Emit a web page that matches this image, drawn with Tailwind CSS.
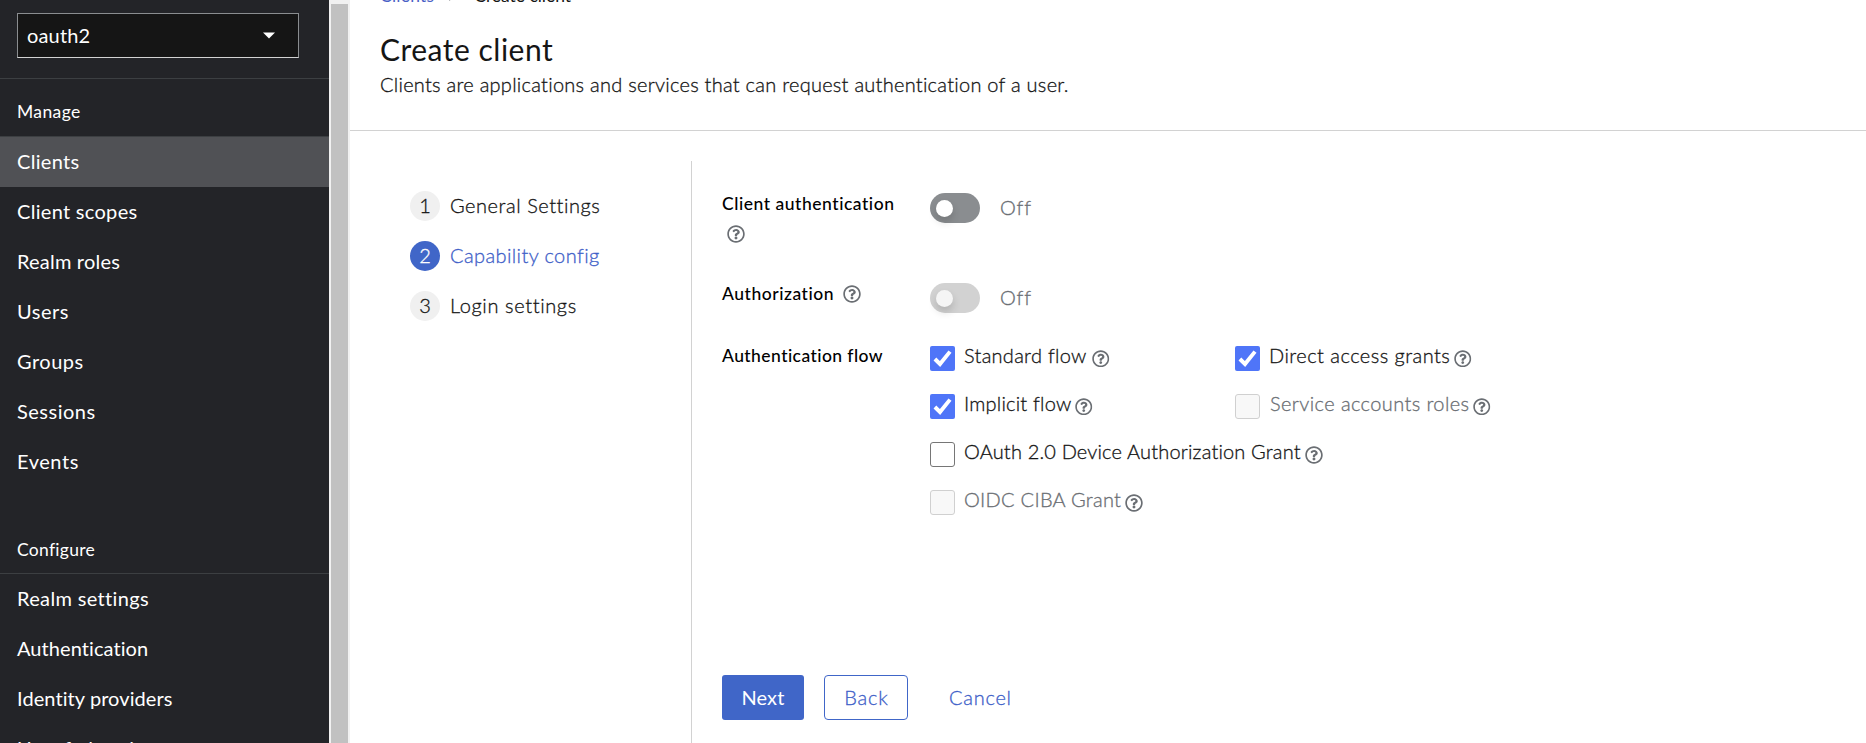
<!DOCTYPE html>
<html lang="en">
<head>
<meta charset="utf-8">
<title>Create client</title>
<script src="https://cdn.jsdelivr.net/npm/@tailwindcss/browser@4"></script>
</head>
<body class="flex h-[743px] w-[1866px] overflow-hidden bg-white font-[Lato,sans-serif] text-[20px] leading-[30px] text-[#151515]">
<svg class="hidden">
  <symbol id="help" viewBox="0 0 512 512"><path fill="currentColor" d="M256 8C119.043 8 8 119.083 8 256c0 136.997 111.043 248 248 248s248-111.003 248-248C504 119.083 392.957 8 256 8zm0 448c-110.532 0-200-89.431-200-200 0-110.495 89.472-200 200-200 110.491 0 200 89.471 200 200 0 110.53-89.431 200-200 200zm107.244-255.2c0 67.052-72.421 68.084-72.421 92.863V300c0 6.627-5.373 12-12 12h-45.647c-6.627 0-12-5.373-12-12v-8.659c0-35.745 27.1-50.034 47.579-61.516 17.561-9.845 28.324-16.541 28.324-29.579 0-17.246-21.999-28.693-39.784-28.693-23.189 0-33.894 10.977-48.942 29.969-4.057 5.12-11.46 6.071-16.666 2.124l-27.824-21.098c-5.107-3.872-6.251-11.066-2.644-16.363C184.846 131.491 214.94 112 261.794 112c49.071 0 101.45 38.304 101.45 88.8zM298 368c0 23.159-18.841 42-42 42s-42-18.841-42-42 18.841-42 42-42 42 18.841 42 42z"/></symbol>
  <symbol id="check" viewBox="0 0 25 25"><path fill="none" stroke="#fff" stroke-width="3.9" d="M4.9 13 10 18 20 5.6"/></symbol>
</svg>

<aside class="h-full w-[329px] shrink-0 overflow-hidden bg-[#232428] text-white">
  <div class="h-[79px] border-b border-[#3c3f42] pt-[13px] pl-[17px]">
    <div class="flex h-[45px] w-[282px] items-center justify-between border border-[#8a8d90] border-b-[#d2d2d2] bg-[#151515] pr-[23px] pl-[9px]">
      <span class="leading-[28px] pb-[2px] tracking-[0.15px]">oauth2</span>
      <svg class="h-[7px] w-[12px]" viewBox="0 0 12 7"><path fill="#fff" d="M0 0.4H12L6 6.6Z"/></svg>
    </div>
  </div>
  <h2 class="flex h-[58px] items-center border-b border-[#3c3f42] pt-[9px] pl-[17px] text-[17.5px] tracking-[0.38px]">Manage</h2>
  <nav class="mb-[50px] *:flex *:h-[50px] *:items-center *:pb-[2px] *:pl-[17px]">
    <a class="bg-[#505155] tracking-[0.31px]">Clients</a>
    <a class="tracking-[0.3px]">Client scopes</a>
    <a class="tracking-[0.2px]">Realm roles</a>
    <a class="tracking-[0.5px]">Users</a>
    <a class="tracking-[0.5px]">Groups</a>
    <a class="tracking-[0.5px]">Sessions</a>
    <a class="tracking-[0.55px]">Events</a>
  </nav>
  <h2 class="flex h-[37px] items-start border-b border-[#3c3f42] pl-[17px] text-[17.5px] leading-[25px] tracking-[0.28px]">Configure</h2>
  <nav class="*:flex *:h-[50px] *:items-center *:pb-[2px] *:pl-[17px]">
    <a class="tracking-[0.34px]">Realm settings</a>
    <a class="tracking-[0.08px]">Authentication</a>
    <a class="tracking-[0.08px]">Identity providers</a>
    <a class="tracking-[0.3px]">User federation</a>
  </nav>
</aside>
<div class="h-full w-[21px] shrink-0 bg-[#f1f1f1] pt-1 pr-[2px] pl-[2px]"><div class="h-full bg-[#c1c1c1]"></div></div>

<main class="flex h-full min-w-0 flex-1 flex-col">
  <header class="-mt-[17px] border-b border-[#d2d2d2] pb-[31px] pl-[30px]">
    <div class="flex h-[26px] items-center text-[17.5px] leading-[26px]">
      <a class="tracking-[0.22px] text-[#4a5fc6]">Clients</a>
      <svg class="mr-[19px] mb-[3px] ml-[14px] h-[12px] w-[7px]" viewBox="0 0 7 12"><path fill="none" stroke="#6a6e73" stroke-width="2" d="M1 1 6 6 1 11"/></svg>
      <span class="tracking-[-0.04px]">Create client</span>
    </div>
    <h1 class="mt-[21px] text-[30px] leading-[39px] tracking-[0.5px]">Create client</h1>
    <p class="font-light tracking-[0.26px] [-webkit-text-stroke:0.3px]">Clients are applications and services that can request authentication of a user.</p>
  </header>
  <div class="flex min-h-0 flex-1 pt-[30px]">
    <nav class="flex w-[342px] shrink-0 flex-col gap-5 border-r border-[#d2d2d2] pt-[30px] pl-[60px] leading-[28px] font-light [-webkit-text-stroke:0.3px]">
      <a class="flex gap-[10px]"><span class="size-[30px] rounded-full bg-[#f0f0f0] text-center leading-[29px]">1</span><span class="tracking-[0.54px]">General Settings</span></a>
      <a class="flex gap-[10px] text-[#4060c8]"><span class="size-[30px] rounded-full bg-[#4066c8] text-center leading-[29px] text-white">2</span><span class="tracking-[0.4px]">Capability config</span></a>
      <a class="flex gap-[10px]"><span class="size-[30px] rounded-full bg-[#f0f0f0] text-center leading-[29px]">3</span><span class="tracking-[0.62px]">Login settings</span></a>
    </nav>
    <form class="flex flex-1 flex-col pt-[28px] pb-[23px] pl-[30px]">
      <div class="flex h-[90px]">
        <div class="w-[208px] text-[17.5px] font-medium text-black"><div class="tracking-[0.53px]">Client authentication</div><svg class="mt-[6px] ml-[5px] size-[18px] text-[#6a6e73]"><use href="#help"/></svg></div>
        <div class="flex h-[30px] gap-5 pt-1">
          <span class="h-[30px] w-[50px] shrink-0 rounded-full bg-[#8a8d90] pt-[7px] pl-[6px]"><span class="block size-[17px] rounded-full bg-white shadow-[0_5px_8px_rgba(3,3,3,0.16)]"></span></span>
          <span class="leading-[28px] font-light tracking-[0.8px] text-[#6a6e73] [-webkit-text-stroke:0.3px]">Off</span>
        </div>
      </div>
      <div class="flex h-[62px]">
        <div class="flex w-[208px] items-start text-[17.5px] font-medium text-black"><span class="tracking-[0.53px]">Authorization</span><svg class="mt-[6px] ml-[9px] size-[18px] text-[#6a6e73]"><use href="#help"/></svg></div>
        <div class="flex h-[30px] gap-5 pt-1">
          <span class="h-[30px] w-[50px] shrink-0 rounded-full bg-[#d2d2d2] pt-[7px] pl-[6px]"><span class="block size-[17px] rounded-full bg-[#f5f5f5] shadow-[0_5px_8px_rgba(3,3,3,0.16)]"></span></span>
          <span class="leading-[28px] font-light tracking-[0.8px] text-[#6a6e73] [-webkit-text-stroke:0.3px]">Off</span>
        </div>
      </div>
      <div class="flex">
        <div class="w-[208px] text-[17.5px] font-medium tracking-[0.43px] text-black">Authentication flow</div>
        <div class="grid grid-cols-[305px_auto] content-start gap-y-[18px] leading-[28px] font-light [-webkit-text-stroke:0.3px] *:flex *:h-[30px]">
          <div><svg class="mt-[5px] mr-[9px] size-[25px] rounded-[2px] bg-[#4f75f8]"><use href="#check"/></svg><span class="w-[128px] tracking-[0.27px]">Standard flow</span><svg class="mt-[8.5px] size-[17.5px] text-[#6a6e73]"><use href="#help"/></svg></div>
          <div><svg class="mt-[5px] mr-[9px] size-[25px] rounded-[2px] bg-[#4f75f8]"><use href="#check"/></svg><span class="w-[185px] tracking-[0.46px]">Direct access grants</span><svg class="mt-[8.5px] size-[17.5px] text-[#6a6e73]"><use href="#help"/></svg></div>
          <div><svg class="mt-[5px] mr-[9px] size-[25px] rounded-[2px] bg-[#4f75f8]"><use href="#check"/></svg><span class="w-[111px] tracking-[0.2px]">Implicit flow</span><svg class="mt-[8.5px] size-[17.5px] text-[#6a6e73]"><use href="#help"/></svg></div>
          <div><i class="mt-[5px] mr-[10px] size-[25px] rounded-[3px] border border-[#d0d0d0] bg-[#f8f8f8]"></i><span class="w-[203px] tracking-[0.4px] text-[#6a6e73]">Service accounts roles</span><svg class="mt-[8.5px] size-[17.5px] text-[#6a6e73]"><use href="#help"/></svg></div>
          <div class="col-span-2"><i class="mt-[5px] mr-[9px] size-[25px] rounded-[3px] border border-[#767676] bg-white"></i><span class="w-[341px] tracking-[0.17px]">OAuth 2.0 Device Authorization Grant</span><svg class="mt-[8.5px] size-[18px] text-[#6a6e73]"><use href="#help"/></svg></div>
          <div class="col-span-2"><i class="mt-[5px] mr-[9px] size-[25px] rounded-[3px] border border-[#d0d0d0] bg-[#f8f8f8]"></i><span class="w-[161px] tracking-[0.28px] text-[#6a6e73]">OIDC CIBA Grant</span><svg class="mt-[8.5px] size-[18px] text-[#6a6e73]"><use href="#help"/></svg></div>
        </div>
      </div>
      <div class="mt-auto flex h-[45px] leading-[45px]">
        <button type="button" class="mr-5 w-[82px] rounded-[3px] bg-[#4066c8] text-center tracking-[0.1px] text-white">Next</button>
        <button type="button" class="mr-[41px] w-[84px] rounded-[4px] border border-[#4066c8] pl-px text-center leading-[43px] font-light tracking-[0.8px] text-[#4060c8] [-webkit-text-stroke:0.3px]">Back</button>
        <button type="button" class="font-light tracking-[0.75px] text-[#4060c8] [-webkit-text-stroke:0.3px]">Cancel</button>
      </div>
    </form>
  </div>
</main>
</body>
</html>
